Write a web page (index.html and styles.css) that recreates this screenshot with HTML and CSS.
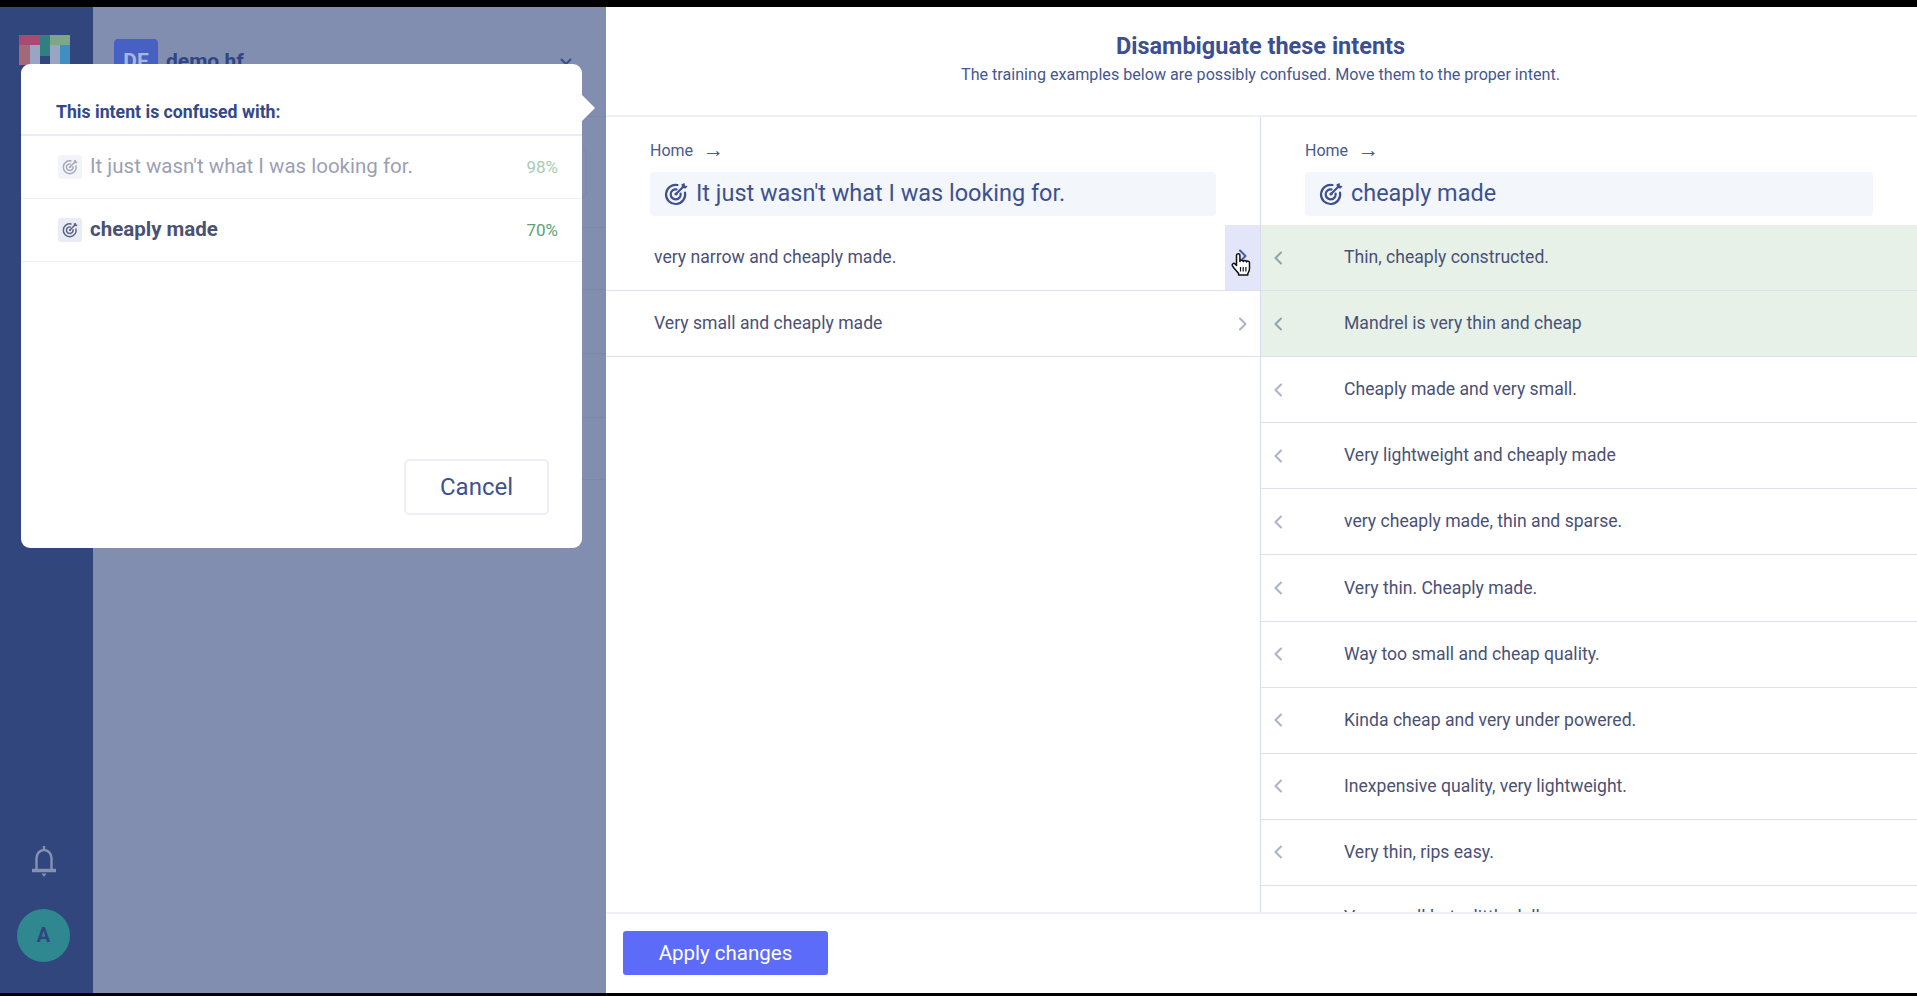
FILE: index.html
```html
<!DOCTYPE html>
<html lang="en">
<head>
  <meta charset="UTF-8">
  <title>Disambiguate these intents</title>
  <link rel="stylesheet" href="styles.css">
</head>
<body>
  <svg class="defs" width="0" height="0">
    <symbol id="target" viewBox="0 0 24 24">
      <g fill="none" stroke="currentColor" stroke-width="2.2" stroke-linecap="round">
        <path d="M21 10.5A9.6 9.6 0 1 1 13.5 3"/>
        <path d="M16.6 11.5A5 5 0 1 1 12.5 7.4"/>
        <path d="M12 12l7-7"/>
      </g>
      <circle cx="12" cy="12" r="1.6" fill="currentColor"/>
      <path d="M17.5 2.2l.6 3.7 3.7.6 1.8-2.4-2.6-.4-.4-2.7z" fill="currentColor"/>
    </symbol>
    <symbol id="chev-left" viewBox="0 0 10 16">
      <path d="M8 2.500L2.500 8 8 13.500" fill="none" stroke="currentColor" stroke-width="2" stroke-linecap="round" stroke-linejoin="round"/>
    </symbol>
    <symbol id="chev-right" viewBox="0 0 10 16">
      <path d="M2 2.500L7.500 8 2 13.500" fill="none" stroke="currentColor" stroke-width="2" stroke-linecap="round" stroke-linejoin="round"/>
    </symbol>
  </svg>

  <div class="app">
    <aside class="rail">
      <svg class="logo" width="51" height="50" viewBox="0 0 51 50">
        <rect x="0" y="0" width="21" height="10" fill="#a94a70"/>
        <rect x="0" y="10" width="11" height="20" fill="#a5687a"/>
        <rect x="21" y="0" width="10" height="21" fill="#2f7f83"/>
        <rect x="31" y="0" width="20" height="10" fill="#7fa58a"/>
        <rect x="41" y="10" width="10" height="20" fill="#3f8fc0"/>
        <rect x="11" y="10" width="10" height="20" fill="#98a5c4"/>
        <rect x="31" y="10" width="10" height="20" fill="#98a5c4"/>
      </svg>
      <svg class="bell" width="26" height="32" viewBox="0 0 26 32">
        <path d="M13 1v4M5.500 25V13a7.500 8 0 0 1 15 0v12" fill="none" stroke="currentColor" stroke-width="2.400"/>
        <path d="M1 25.500h24" stroke="currentColor" stroke-width="3.500"/>
        <path d="M10.500 28.500h5L13 32z" fill="currentColor"/>
      </svg>
      <div class="avatar">A</div>
    </aside>

    <section class="projects">
      <div class="project-head">
        <div class="tile">DE</div>
        <div class="project-name">demo hf</div>
        <svg class="project-chev" width="14" height="9" viewBox="0 0 14 9">
          <path d="M2 2l5 5 5-5" fill="none" stroke="currentColor" stroke-width="2"/>
        </svg>
      </div>
      <div class="ghost-search"><div class="ghost-box"></div></div>
      <div class="ghost-row"></div>
      <div class="ghost-row ghost-tall"></div>
      <div class="ghost-row ghost-tall"></div>
      <div class="ghost-row"></div>
    </section>

    <main class="main">
      <header class="head">
        <h1>Disambiguate these intents</h1>
        <p>The training examples below are possibly confused. Move them to the proper intent.</p>
      </header>

      <div class="columns">
        <div class="col col-left">
          <div class="col-head">
            <div class="crumb">Home <span class="arrow">→</span></div>
            <div class="chip"><svg class="chip-icon"><use href="#target"/></svg>It just wasn't what I was looking for.</div>
          </div>
          <div class="row row-hover">
            <span class="row-text">very narrow and cheaply made.</span>
            <span class="move move-hover">
              <svg class="chev chev-active" width="10" height="16"><use href="#chev-right"/></svg>
              <svg class="hand" width="21" height="25" viewBox="0 0 21 25">
                <path d="M5.500 13.500V3.600c0-2.400 3.400-2.400 3.400 0v6c.3-2 3.200-1.800 3.400 0 .3-1.700 3-1.500 3.200.3.500-1.300 3-1 3 .9v5.600c0 2.400-.8 3.400-1.700 5.100v1.500H7.600v-1.500C6.200 19.400 3 16.500 1.600 14.200c-1.200-2 1.100-3.700 2.500-2.200z" fill="#fff" stroke="#111" stroke-width="1.500" stroke-linejoin="round"/>
                <path d="M9.500 15v4.500M12.200 15v4.500M14.900 15v4.500" stroke="#111" stroke-width="1.200"/>
              </svg>
            </span>
          </div>
          <div class="row">
            <span class="row-text">Very small and cheaply made</span>
            <span class="move"><svg class="chev" width="10" height="16"><use href="#chev-right"/></svg></span>
          </div>
        </div>

        <div class="col col-right">
          <div class="col-head">
            <div class="crumb">Home <span class="arrow">→</span></div>
            <div class="chip"><svg class="chip-icon"><use href="#target"/></svg>cheaply made</div>
          </div>
          <div class="row row-new"><svg class="chev" width="10" height="16"><use href="#chev-left"/></svg><span class="row-text">Thin, cheaply constructed.</span></div>
          <div class="row row-new"><svg class="chev" width="10" height="16"><use href="#chev-left"/></svg><span class="row-text">Mandrel is very thin and cheap</span></div>
          <div class="row"><svg class="chev" width="10" height="16"><use href="#chev-left"/></svg><span class="row-text">Cheaply made and very small.</span></div>
          <div class="row"><svg class="chev" width="10" height="16"><use href="#chev-left"/></svg><span class="row-text">Very lightweight and cheaply made</span></div>
          <div class="row"><svg class="chev" width="10" height="16"><use href="#chev-left"/></svg><span class="row-text">very cheaply made, thin and sparse.</span></div>
          <div class="row"><svg class="chev" width="10" height="16"><use href="#chev-left"/></svg><span class="row-text">Very thin. Cheaply made.</span></div>
          <div class="row"><svg class="chev" width="10" height="16"><use href="#chev-left"/></svg><span class="row-text">Way too small and cheap quality.</span></div>
          <div class="row"><svg class="chev" width="10" height="16"><use href="#chev-left"/></svg><span class="row-text">Kinda cheap and very under powered.</span></div>
          <div class="row"><svg class="chev" width="10" height="16"><use href="#chev-left"/></svg><span class="row-text">Inexpensive quality, very lightweight.</span></div>
          <div class="row"><svg class="chev" width="10" height="16"><use href="#chev-left"/></svg><span class="row-text">Very thin, rips easy.</span></div>
          <div class="row row-cut"><span class="row-text">Very small but a little dull</span></div>
        </div>
      </div>

      <footer class="foot">
        <button class="apply">Apply changes</button>
      </footer>
    </main>

    <div class="popup">
      <div class="popup-title">This intent is confused with:</div>
      <div class="match match-dim">
        <span class="match-icon"><svg width="16" height="16"><use href="#target"/></svg></span>
        <span class="match-name">It just wasn't what I was looking for.</span>
        <span class="match-pct">98%</span>
      </div>
      <div class="match">
        <span class="match-icon"><svg width="16" height="16"><use href="#target"/></svg></span>
        <span class="match-name match-strong">cheaply made</span>
        <span class="match-pct">70%</span>
      </div>
      <div class="popup-foot">
        <button class="cancel">Cancel</button>
      </div>
    </div>
  </div>
</body>
</html>
```

FILE: styles.css
```css
* {
  box-sizing: border-box;
}
html, body {
  height: 100%;
}
body {
  margin: 0;
  background: #000;
  font-family: Roboto, "Liberation Sans", sans-serif;
  overflow: hidden;
}
.defs {
  position: absolute;
}
.app {
  position: relative;
  display: flex;
  height: 986px;
  margin-top: 7px;
}

/* left rail, dimmed by the popup */
.rail {
  width: 93px;
  flex: none;
  display: flex;
  flex-direction: column;
  align-items: center;
  padding: 0 6px 31px 0;
  background: #30467c;
}
.logo {
  margin: 28px 0 0 2px;
}
.bell {
  margin-top: auto;
  color: #8592b3;
}
.avatar {
  width: 53px;
  height: 53px;
  margin-top: 32px;
  border-radius: 50%;
  background: #2f8790;
  color: #30467c;
  font-size: 20px;
  font-weight: 700;
  line-height: 53px;
  text-align: center;
}

/* project list behind the popup */
.projects {
  width: 513px;
  flex: none;
  background: #828eb0;
}
.project-head {
  display: flex;
  align-items: center;
  gap: 8px;
  height: 110px;
  padding: 32px 33px 33px 21px;
  border-bottom: 1px solid #7c88ab;
}
.tile {
  width: 44px;
  height: 44px;
  border-radius: 4px;
  background: #4660c4;
  color: #aab6dc;
  font-size: 21px;
  font-weight: 700;
  line-height: 44px;
  text-align: center;
}
.project-name {
  color: #2f4585;
  font-size: 21px;
  font-weight: 700;
}
.project-chev {
  margin-left: auto;
  color: #3a4f86;
}
.ghost-search {
  height: 111px;
  padding: 31px 19px 0 21px;
  border-bottom: 1px solid #7c88ab;
}
.ghost-box {
  height: 50px;
  border: 1px solid #7c88ab;
  border-radius: 6px;
}
.ghost-row {
  height: 62px;
  border-bottom: 1px solid #7c88ab;
}
.ghost-tall {
  height: 64px;
}

/* main panel */
.main {
  flex: 1;
  min-width: 0;
  display: flex;
  flex-direction: column;
  background: #fff;
}
.head {
  height: 110px;
  flex: none;
  padding: 25px 2px 0 0;
  text-align: center;
  border-bottom: 2px solid #eeeff8;
}
.head h1 {
  margin: 0;
  color: #3c4f92;
  font-size: 23.5px;
  font-weight: 700;
  line-height: 28px;
}
.head p {
  margin: 4px 0 0;
  color: #45578f;
  font-size: 16.13px;
  line-height: 22px;
}
.columns {
  flex: 1;
  min-height: 0;
  display: flex;
  overflow: hidden;
}
.col-left {
  width: 655px;
  flex: none;
  border-right: 1px solid #d9dcf0;
}
.col-right {
  flex: 1;
}
.col-head {
  height: 108px;
  padding: 23px 44px 0;
}
.crumb {
  display: flex;
  align-items: center;
  color: #4a5a8a;
  font-size: 16px;
  line-height: 22px;
}
.arrow {
  margin: -2px 0 0 10px;
  font-size: 21px;
  line-height: 22px;
}
.chip {
  display: flex;
  align-items: center;
  height: 44px;
  margin-top: 10px;
  padding: 0 0 2px 14px;
  border-radius: 4px;
  background: #f3f6fb;
  color: #3d5190;
  font-size: 23.45px;
}
.chip-icon {
  width: 24px;
  height: 24px;
  margin: 2px 8px 0 0;
}
.row {
  position: relative;
  display: flex;
  align-items: center;
  height: 66.1px;
  border-bottom: 1px solid #dfe1f2;
}
.row-text {
  padding-bottom: 1px;
  color: #4a5175;
  font-size: 17.6px;
}
.col-left .row-text {
  padding-left: 48px;
}
.col-right .row-text {
  padding-left: 61px;
}
.chev {
  flex: none;
  color: #aab2cc;
}
.col-right .chev {
  margin-left: 12px;
}
.col-right .row-cut .row-text {
  padding: 0 0 3px 83px;
}
.row-new {
  background: #e7f1e7;
}
.row-new .chev {
  color: #8fa5ad;
}
.move {
  display: flex;
  align-items: center;
  justify-content: center;
  width: 35px;
  height: 100%;
  margin-left: auto;
}
.move-hover {
  position: relative;
  background: #e3e6f8;
}
.chev-active {
  color: #4a5a9e;
  margin-top: -4px;
}
.hand {
  position: absolute;
  left: 6px;
  top: 27px;
}

.foot {
  height: 81px;
  flex: none;
  padding: 17px 0 0 17px;
  border-top: 2px solid #eeeff8;
}
.apply {
  width: 205px;
  height: 44px;
  border: none;
  border-radius: 3px;
  background: #5d6bf9;
  color: #fff;
  font-family: inherit;
  font-size: 20.5px;
}

/* popup over the list */
.popup {
  position: absolute;
  left: 21px;
  top: 57px;
  width: 561px;
  height: 484px;
  display: flex;
  flex-direction: column;
  border-radius: 9px;
  background: #fff;
}
.popup::after {
  content: "";
  position: absolute;
  left: 100%;
  top: 31px;
  border-style: solid;
  border-width: 13px 0 13px 13px;
  border-color: transparent transparent transparent #fff;
}
.popup-title {
  height: 72px;
  flex: none;
  padding: 36px 0 0 35px;
  border-bottom: 2px solid #e9ebf6;
  color: #34478a;
  font-size: 17.7px;
  font-weight: 700;
  line-height: 24px;
}
.match {
  display: flex;
  align-items: center;
  height: 63px;
  flex: none;
  padding: 0 24px 0 37px;
  border-bottom: 1px solid #eeeff6;
}
.match-icon {
  display: flex;
  align-items: center;
  justify-content: center;
  width: 24px;
  height: 24px;
  margin-right: 8px;
  border-radius: 3px;
  background: #eaecf5;
  color: #5b6385;
}
.match-name {
  padding-bottom: 2px;
  color: #4a5175;
  font-size: 20.5px;
}
.match-strong {
  font-weight: 700;
}
.match-pct {
  margin-left: auto;
  color: #5e9f73;
  font-size: 17px;
}
.match-dim .match-icon,
.match-dim .match-name,
.match-dim .match-pct {
  opacity: 0.55;
}
.popup-foot {
  margin-top: auto;
  padding: 0 33px 33px 0;
  text-align: right;
}
.cancel {
  width: 145px;
  height: 56px;
  border: 2px solid #eeeefb;
  border-radius: 5px;
  background: #fff;
  color: #3f528f;
  font-family: inherit;
  font-size: 24px;
}
```
